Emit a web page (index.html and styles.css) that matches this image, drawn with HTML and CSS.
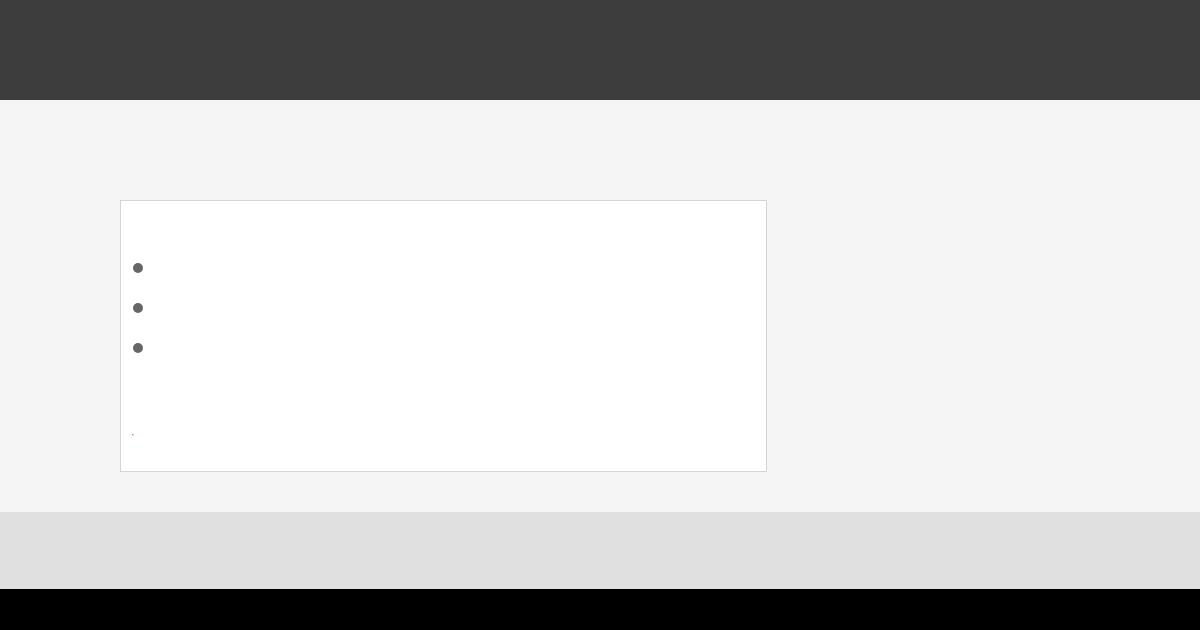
FILE: index.html
```html
<!DOCTYPE html>
<html lang="en">
<head>
<meta charset="utf-8">
<title>Page</title>
<link rel="stylesheet" href="styles.css">
</head>
<body>
<header class="top"></header>
<main class="main">
  <section class="card">
    <ul class="list">
      <li class="item"><span class="dot"></span></li>
      <li class="item"><span class="dot"></span></li>
      <li class="item"><span class="dot"></span></li>
    </ul>
    <p class="tiny">'</p>
  </section>
</main>
<footer class="foot"></footer>
</body>
</html>
```
FILE: styles.css
```css
html { background: #000; }
body {
  margin: 0;
  font-family: "Liberation Sans", Arial, sans-serif;
}
.top {
  height: 100px;
  background: #3d3d3d;
}
.main {
  background: #f5f5f5;
  padding: 100px 120px 40px;
}
.card {
  width: 645px;
  height: 270px;
  background: #fff;
  border: 1px solid #d4d4d4;
  box-sizing: content-box;
  display: flex;
  flex-direction: column;
}
.list {
  list-style: none;
  margin: 0;
  padding: 62px 0 0 12px;
  display: flex;
  flex-direction: column;
  gap: 30px;
}
.item {
  height: 10px;
  display: flex;
}
.dot {
  width: 10px;
  height: 10px;
  border-radius: 50%;
  background: #666;
}
.tiny {
  margin: 0;
  padding: 80px 0 0 11px;
  font-size: 8px;
  line-height: 8px;
  color: #222;
}
.foot {
  height: 77px;
  background: #e0e0e0;
}
```
